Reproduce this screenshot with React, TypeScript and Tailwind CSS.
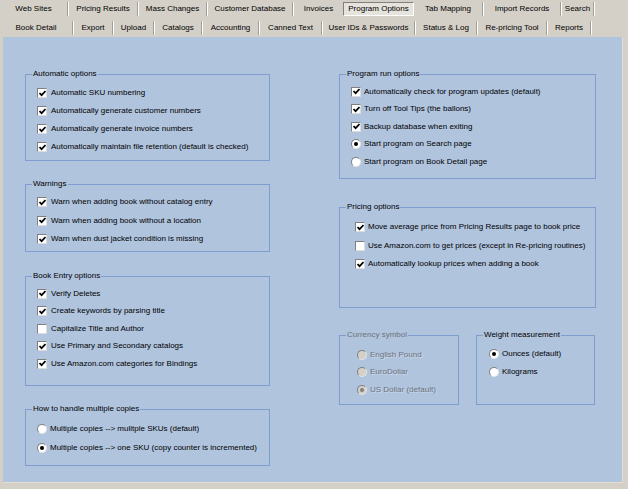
import { Fragment, ReactNode } from "react"

// tab strip: label + width of the text cell (separators are drawn between)
const row1 = [
  { label: "Web Sites", w: "w-[67px]" },
  { label: "Pricing Results", w: "w-[68px]" },
  { label: "Mass Changes", w: "w-[67px]" },
  { label: "Customer Database", w: "w-[84px]" },
  { label: "Invoices", w: "w-[49px]", noSep: true },
  { label: "Program Options", w: "w-[71px]", active: true },
  { label: "Tab Mapping", w: "w-[68px]" },
  { label: "Import Records", w: "w-[76px]" },
  { label: "Search", w: "w-[31px]" },
]

const row2 = [
  { label: "Book Detail", w: "w-[72px]" },
  { label: "Export", w: "w-[38px]" },
  { label: "Upload", w: "w-[39px]" },
  { label: "Catalogs", w: "w-[46px]" },
  { label: "Accounting", w: "w-[55px]" },
  { label: "Canned Text", w: "w-[61px]" },
  { label: "User IDs & Passwords", w: "w-[91px]" },
  { label: "Status & Log", w: "w-[60px]" },
  { label: "Re-pricing Tool", w: "w-[68px]" },
  { label: "Reports", w: "w-[42px]" },
]

interface Tab { label: string; w: string; active?: boolean; noSep?: boolean }

function TabRow({ tabs, h }: { tabs: Tab[]; h: string }) {
  return (
    <div className={"flex items-center " + h}>
      {tabs.map((t, i) => (
        <Fragment key={i}>
          {t.active ? (
            <div className={t.w + " h-[14px] flex items-center justify-center bg-[#e6e3dc] border border-t-[#808080] border-l-[#808080] border-b-white border-r-white"}>
              {t.label}
            </div>
          ) : (
            <>
              <div className={t.w + " flex items-center justify-center"}>{t.label}</div>
              {!t.noSep && <div className="w-[2px] h-[14px] border-l border-l-[#a09d96] border-r border-r-white" />}
            </>
          )}
        </Fragment>
      ))}
    </div>
  )
}

function Check({ on }: { on: boolean }) {
  return (
    <span className="w-[10px] h-[10px] shrink-0 bg-white border border-t-[#808080] border-l-[#808080] border-b-[#dcdcdc] border-r-[#dcdcdc] flex items-center justify-center">
      {on && (
        <svg width="7" height="7" viewBox="0 0 7 7">
          <path d="M0.5 3 L2.6 5.2 L6.5 1" fill="none" stroke="#000" strokeWidth="1.7" />
        </svg>
      )}
    </span>
  )
}

function Radio({ on, disabled }: { on: boolean; disabled?: boolean }) {
  return (
    <span className={"w-[10px] h-[10px] shrink-0 rounded-full border border-t-[#808080] border-l-[#808080] border-b-[#e4e4e4] border-r-[#e4e4e4] flex items-center justify-center " + (disabled ? "bg-[#d4d0c8]" : "bg-white")}>
      {on && <span className={"w-[4px] h-[4px] rounded-full " + (disabled ? "bg-[#808080]" : "bg-black")} />}
    </span>
  )
}

function Group({ title, className, disabled, children }: { title: string; className: string; disabled?: boolean; children: ReactNode }) {
  return (
    <div className={"relative border border-[#7f9dcf] flex flex-col " + className}>
      <span className={"absolute left-[6px] -top-[6px] px-[1px] bg-[#b0c4de] leading-[10px] " + (disabled ? "text-[#6c737c]" : "")}>
        {title}
      </span>
      {children}
    </div>
  )
}

function Item({ h, gap, box, children, disabled }: { h: string; gap: string; box: ReactNode; children: ReactNode; disabled?: boolean }) {
  return (
    <div className={"flex items-center " + h + " " + gap}>
      {box}
      <span className={"whitespace-nowrap " + (disabled ? "text-[#6c737c] [text-shadow:1px_1px_0_rgba(255,255,255,0.35)]" : "")}>{children}</span>
    </div>
  )
}

export default function App() {
  return (
    <div className="w-[628px] h-[489px] bg-[#d4d0c8] text-black text-[8px] leading-none overflow-hidden" style={{ fontFamily: '"Liberation Sans", Arial, sans-serif' }}>
      <TabRow tabs={row1} h="h-[18px]" />
      <TabRow tabs={row2} h="h-[19px]" />

      <div className="ml-[3px] w-[620px] h-[446px] bg-[#b0c4de] border-r border-b border-[#e2ded4] flex pt-[37px] pl-[22px] gap-[69px]">
        {/* left column */}
        <div className="w-[245px] flex flex-col">
          <Group title="Automatic options" className="h-[87px] pt-[9px] pl-[11px]">
            <Item h="h-[18px]" gap="gap-[4px]" box={<Check on />}>Automatic SKU numbering</Item>
            <Item h="h-[18px]" gap="gap-[4px]" box={<Check on />}>Automatically generate customer numbers</Item>
            <Item h="h-[18px]" gap="gap-[4px]" box={<Check on />}>Automatically generate invoice numbers</Item>
            <Item h="h-[18px]" gap="gap-[4px]" box={<Check on />}>Automatically maintain file retention (default is checked)</Item>
          </Group>

          <Group title="Warnings" className="mt-[23px] h-[68px] pt-[8px] pl-[11px]">
            <Item h="h-[18.5px]" gap="gap-[4px]" box={<Check on />}>Warn when adding book without catalog entry</Item>
            <Item h="h-[18.5px]" gap="gap-[4px]" box={<Check on />}>Warn when adding book without a location</Item>
            <Item h="h-[18.5px]" gap="gap-[4px]" box={<Check on />}>Warn when dust jacket condition is missing</Item>
          </Group>

          <Group title="Book Entry options" className="mt-[24px] h-[110px] pt-[8px] pl-[11px]">
            <Item h="h-[17.5px]" gap="gap-[4px]" box={<Check on />}>Verify Deletes</Item>
            <Item h="h-[17.5px]" gap="gap-[4px]" box={<Check on />}>Create keywords by parsing title</Item>
            <Item h="h-[17.5px]" gap="gap-[4px]" box={<Check on={false} />}>Capitalize Title and Author</Item>
            <Item h="h-[17.5px]" gap="gap-[4px]" box={<Check on />}>Use Primary and Secondary catalogs</Item>
            <Item h="h-[17.5px]" gap="gap-[4px]" box={<Check on />}>Use Amazon.com categories for Bindings</Item>
          </Group>

          <Group title="How to handle multiple copies" className="mt-[23px] h-[57px] pt-[9.5px] pl-[11px]">
            <Item h="h-[19px]" gap="gap-[3px]" box={<Radio on={false} />}>Multiple copies --&gt; mulitple SKUs (default)</Item>
            <Item h="h-[19px]" gap="gap-[3px]" box={<Radio on />}>Multiple copies --&gt; one SKU (copy counter is incremented)</Item>
          </Group>
        </div>

        {/* right column */}
        <div className="w-[257px] flex flex-col">
          <Group title="Program run options" className="h-[105px] pt-[8px] pl-[11px]">
            <Item h="h-[17.5px]" gap="gap-[3px]" box={<Check on />}>Automatically check for program updates (default)</Item>
            <Item h="h-[17.5px]" gap="gap-[3px]" box={<Check on />}>Turn off Tool Tips (the ballons)</Item>
            <Item h="h-[17.5px]" gap="gap-[3px]" box={<Check on />}>Backup database when exiting</Item>
            <Item h="h-[17.5px]" gap="gap-[3px]" box={<Radio on />}>Start program on Search page</Item>
            <Item h="h-[17.5px]" gap="gap-[3px]" box={<Radio on={false} />}>Start program on Book Detail page</Item>
          </Group>

          <Group title="Pricing options" className="mt-[28px] h-[101px] pt-[10px] pl-[15px]">
            <Item h="h-[18.5px]" gap="gap-[3px]" box={<Check on />}>Move average price from Pricing Results page to book price</Item>
            <Item h="h-[18.5px]" gap="gap-[3px]" box={<Check on={false} />}>Use Amazon.com to get prices (except in Re-pricing routines)</Item>
            <Item h="h-[18.5px]" gap="gap-[3px]" box={<Check on />}>Automatically lookup prices when adding a book</Item>
          </Group>

          <div className="mt-[27px] flex gap-[17px]">
            <Group title="Currency symbol" disabled className="w-[120px] h-[70px] pt-[10px] pl-[17px]">
              <Item h="h-[17.5px]" gap="gap-[3px]" disabled box={<Radio on={false} disabled />}>English Pound</Item>
              <Item h="h-[17.5px]" gap="gap-[3px]" disabled box={<Radio on={false} disabled />}>EuroDollar</Item>
              <Item h="h-[17.5px]" gap="gap-[3px]" disabled box={<Radio on disabled />}>US Dollar (default)</Item>
            </Group>
            <Group title="Weight measurement" className="w-[119px] h-[70px] pt-[9px] pl-[12px]">
              <Item h="h-[18px]" gap="gap-[3px]" box={<Radio on />}>Ounces (default)</Item>
              <Item h="h-[18px]" gap="gap-[3px]" box={<Radio on={false} />}>Kilograms</Item>
            </Group>
          </div>
        </div>
      </div>
    </div>
  )
}
